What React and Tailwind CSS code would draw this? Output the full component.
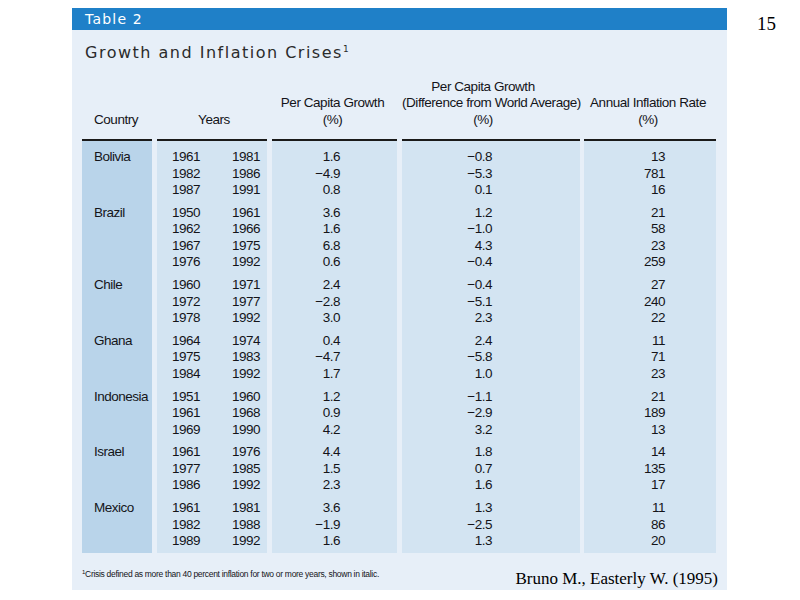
import React from 'react';

const narrow = { fontFamily: '"Liberation Sans", Arial, sans-serif' };

const groups = [
  {
    country: 'Bolivia',
    rows: [
      ['1961', '1981', '1.6', '−0.8', '13'],
      ['1982', '1986', '−4.9', '−5.3', '781'],
      ['1987', '1991', '0.8', '0.1', '16'],
    ],
  },
  {
    country: 'Brazil',
    rows: [
      ['1950', '1961', '3.6', '1.2', '21'],
      ['1962', '1966', '1.6', '−1.0', '58'],
      ['1967', '1975', '6.8', '4.3', '23'],
      ['1976', '1992', '0.6', '−0.4', '259'],
    ],
  },
  {
    country: 'Chile',
    rows: [
      ['1960', '1971', '2.4', '−0.4', '27'],
      ['1972', '1977', '−2.8', '−5.1', '240'],
      ['1978', '1992', '3.0', '2.3', '22'],
    ],
  },
  {
    country: 'Ghana',
    rows: [
      ['1964', '1974', '0.4', '2.4', '11'],
      ['1975', '1983', '−4.7', '−5.8', '71'],
      ['1984', '1992', '1.7', '1.0', '23'],
    ],
  },
  {
    country: 'Indonesia',
    rows: [
      ['1951', '1960', '1.2', '−1.1', '21'],
      ['1961', '1968', '0.9', '−2.9', '189'],
      ['1969', '1990', '4.2', '3.2', '13'],
    ],
  },
  {
    country: 'Israel',
    rows: [
      ['1961', '1976', '4.4', '1.8', '14'],
      ['1977', '1985', '1.5', '0.7', '135'],
      ['1986', '1992', '2.3', '1.6', '17'],
    ],
  },
  {
    country: 'Mexico',
    rows: [
      ['1961', '1981', '3.6', '1.3', '11'],
      ['1982', '1988', '−1.9', '−2.5', '86'],
      ['1989', '1992', '1.6', '1.3', '20'],
    ],
  },
];

function Column({ width, header, headerAlign = 'text-center', bg = 'bg-[#d3e4f2]', children }) {
  return (
    <div className="flex flex-col shrink-0" style={{ width }}>
      <div className={`h-[76px] flex flex-col justify-end pb-[11px] leading-[16.5px] whitespace-nowrap tracking-[-0.45px] ${headerAlign}`}>
        {header}
      </div>
      <div className={`border-t-2 border-[#1a1a1a] ${bg} flex-1 pt-[8px] flex flex-col gap-[6.25px]`}>
        {children}
      </div>
    </div>
  );
}

function Group({ rows, render }) {
  return (
    <div className="flex flex-col">
      {rows.map((r, i) => (
        <div key={i} className="h-[16.5px] leading-[16.5px] whitespace-nowrap">
          {render(r, i)}
        </div>
      ))}
    </div>
  );
}

export default function App() {
  return (
    <div className="w-[800px] h-[600px] bg-white flex">
      <div className="ml-[72px] mt-[8px] w-[655px] h-[582px] bg-[#e7eff8] flex flex-col shrink-0">
        <div className="h-[22px] bg-[#1f80c8] px-[13px] flex items-center">
          <span
            className="text-white text-[14px] tracking-[1.2px]"
            style={{ fontFamily: '"DejaVu Sans", sans-serif' }}
          >
            Table 2
          </span>
        </div>

        <div
          className="mt-[13px] pl-[13px] h-[20px] leading-[20px] text-[16px] tracking-[1.5px] text-[#2b2b2b]"
          style={{ fontFamily: '"DejaVu Sans", sans-serif' }}
        >
          Growth and Inflation Crises<span className="text-[9px] relative -top-[6px]">1</span>
        </div>

        <div className="flex pl-[10px] h-[490px] text-[13.5px] tracking-[-0.5px] text-[#141419]" style={narrow}>
          <Column
            width={70}
            headerAlign="text-left pl-[12px]"
            bg="bg-[#b9d4ea]"
            header={<div>Country</div>}
          >
            {groups.map((g) => (
              <div key={g.country} className="pl-[12px] leading-[16.5px]" style={{ height: g.rows.length * 16.5 }}>
                {g.country}
              </div>
            ))}
          </Column>

          <div className="w-[5px] shrink-0" />

          <Column width={110} header={<div className="pl-[4px]">Years</div>}>
            {groups.map((g) => (
              <Group
                key={g.country}
                rows={g.rows}
                render={(r) => (
                  <div className="flex pl-[15px]">
                    <span className="w-[60px]">{r[0]}</span>
                    <span>{r[1]}</span>
                  </div>
                )}
              />
            ))}
          </Column>

          <div className="w-[5px] shrink-0" />

          <Column
            width={125}
            header={
              <>
                <div className="pr-[4px]">Per Capita Growth</div>
                <div className="pr-[4px]">(%)</div>
              </>
            }
          >
            {groups.map((g) => (
              <Group key={g.country} rows={g.rows} render={(r) => <div className="text-right pr-[57px]">{r[2]}</div>} />
            ))}
          </Column>

          <div className="w-[5px] shrink-0" />

          <Column
            width={178}
            header={
              <div className="pr-[16px]">
                <div>Per Capita Growth</div>
                <div>(Difference from World Average)</div>
                <div>(%)</div>
              </div>
            }
          >
            {groups.map((g) => (
              <Group key={g.country} rows={g.rows} render={(r) => <div className="text-right pr-[88px]">{r[3]}</div>} />
            ))}
          </Column>

          <div className="w-[4px] shrink-0" />

          <Column
            width={132}
            header={
              <div className="pr-[4px]">
                <div>Annual Inflation Rate</div>
                <div>(%)</div>
              </div>
            }
          >
            {groups.map((g) => (
              <Group key={g.country} rows={g.rows} render={(r) => <div className="text-right pr-[51px]">{r[4]}</div>} />
            ))}
          </Column>
        </div>

        <div className="flex-1 flex items-start justify-between pl-[10px] pr-[9px] pt-[15px]">
          <div className="text-[8.5px] font-medium text-[#141419] tracking-[-0.3px] whitespace-nowrap" style={narrow}>
            <span className="text-[6px] relative -top-[3px]">1</span>Crisis defined as more than 40 percent inflation for two or more years, shown in italic.
          </div>
          <div
            className="text-[17px] text-black leading-[20px] mt-[1px] whitespace-nowrap"
            style={{ fontFamily: '"Liberation Serif", serif' }}
          >
            Bruno M., Easterly W. (1995)
          </div>
        </div>
      </div>

      <div
        className="ml-[30px] mt-[13px] text-[19px] text-black leading-[22px]"
        style={{ fontFamily: '"Liberation Serif", serif' }}
      >
        15
      </div>
    </div>
  );
}
